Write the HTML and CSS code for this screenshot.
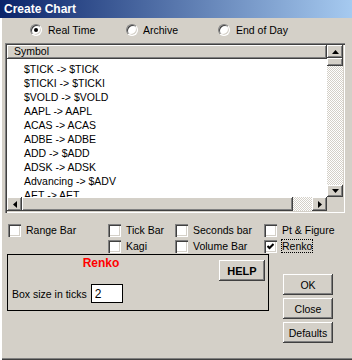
FILE: index.html
```html
<!DOCTYPE html>
<html lang="en">
<head>
    <meta charset="UTF-8">
    <meta name="viewport" content="width=device-width, initial-scale=1.0">
    <title>Create Chart</title>
    <link rel="stylesheet" href="styles.css">
</head>
<body>

<div class="window">

    <!-- Title bar -->
    <div class="titlebar">Create Chart</div>

    <!-- Data source -->
    <div class="sources">
        <label class="radio-item src-real"><span class="radio checked"></span>Real Time</label>
        <label class="radio-item src-archive"><span class="radio"></span>Archive</label>
        <label class="radio-item"><span class="radio"></span>End of Day</label>
    </div>

    <!-- Symbol list -->
    <div class="listbox">
        <div class="list-view">
            <div class="list-header">Symbol</div>
            <ul class="list-items">
                <li>$TICK -&gt; $TICK</li>
                <li>$TICKI -&gt; $TICKI</li>
                <li>$VOLD -&gt; $VOLD</li>
                <li>AAPL -&gt; AAPL</li>
                <li>ACAS -&gt; ACAS</li>
                <li>ADBE -&gt; ADBE</li>
                <li>ADD -&gt; $ADD</li>
                <li>ADSK -&gt; ADSK</li>
                <li>Advancing -&gt; $ADV</li>
                <li>AET -&gt; AET</li>
            </ul>
        </div>
        <div class="vscroll">
            <div class="sb-btn sb-v"><svg width="7" height="4" viewBox="0 0 7 4"><path d="M3.5 0L7 4H0z" fill="#000"/></svg></div>
            <div class="sb-thumb v-thumb"></div>
            <div class="sb-track"></div>
            <div class="sb-btn sb-v sb-down"><svg width="7" height="4" viewBox="0 0 7 4"><path d="M0 0H7L3.5 4z" fill="#000"/></svg></div>
        </div>
        <div class="hscroll">
            <div class="sb-btn sb-h"><svg width="4" height="7" viewBox="0 0 4 7"><path d="M0 3.5L4 0V7z" fill="#000"/></svg></div>
            <div class="sb-thumb h-thumb"></div>
            <div class="sb-track"></div>
            <div class="sb-btn sb-h"><svg width="4" height="7" viewBox="0 0 4 7"><path d="M0 0L4 3.5L0 7z" fill="#000"/></svg></div>
        </div>
        <div class="sb-corner"></div>
    </div>

    <!-- Chart types -->
    <div class="options">
        <label class="check-item"><span class="check"></span>Range Bar</label>
        <label class="check-item"><span class="check"></span>Tick Bar</label>
        <label class="check-item"><span class="check"></span>Seconds bar</label>
        <label class="check-item"><span class="check"></span>Pt &amp; Figure</label>
        <span></span>
        <label class="check-item"><span class="check"></span>Kagi</label>
        <label class="check-item"><span class="check"></span>Volume Bar</label>
        <label class="check-item"><span class="check"><svg width="7" height="7" viewBox="0 0 7 7"><path d="M0.5 3L2.5 5L6.5 1" stroke="#000" stroke-width="2" fill="none"/></svg></span><span class="focus">Renko</span></label>
    </div>

    <div class="bottom">
        <!-- Settings for selected type -->
        <div class="group">
            <div class="group-head">
                <div class="group-title">Renko</div>
                <button class="btn help-btn">HELP</button>
            </div>
            <div class="field">
                <span>Box size in ticks</span>
                <input class="num-input" type="text" value="2">
            </div>
        </div>

        <div class="actions">
            <button class="btn">OK</button>
            <button class="btn">Close</button>
            <button class="btn">Defaults</button>
        </div>
    </div>

</div>

</body>
</html>
```

FILE: styles.css
```css
body {
    margin: 0;
    padding: 0;
    font-family: "Liberation Sans", Arial, sans-serif;
    font-size: 10.5px;
    color: #000;
    background-color: #d4d0c8;
}

/* Dialog frame */
.window {
    width: 352px;
    height: 360px;
    box-sizing: border-box;
    background-color: #d4d0c8;
    box-shadow: inset 2px 0 #fff, inset 0 -1px #404040, inset 0 -2px #808080;
    overflow: hidden;
}

.titlebar {
    height: 18px;
    line-height: 18px;
    padding-left: 4px;
    font-size: 12px;
    font-weight: bold;
    color: #fff;
    background: linear-gradient(to right, #0a246a, #a6caf0);
}

/* Radio row */
.sources {
    display: flex;
    align-items: center;
    height: 16px;
    margin-top: 4px;
    padding-left: 30px;
}

.radio-item {
    display: flex;
    align-items: center;
    gap: 6px;
}

.src-real { width: 96px; }
.src-archive { width: 92px; gap: 5px; }

.radio {
    position: relative;
    width: 12px;
    height: 12px;
    border-radius: 50%;
    background: #fff;
    box-sizing: border-box;
    border: 1px solid;
    border-color: #808080 #fff #fff #808080;
    box-shadow: inset 1px 1px #404040, inset -1px -1px #d4d0c8;
}

.radio.checked::after {
    content: "";
    position: absolute;
    left: 3px;
    top: 3px;
    width: 4px;
    height: 4px;
    border-radius: 50%;
    background: #000;
}

/* List box with scrollbars */
.listbox {
    display: grid;
    grid-template-columns: 320px 16px;
    grid-template-rows: 152px 14px;
    width: 340px;
    height: 170px;
    box-sizing: border-box;
    margin: 5px 0 0 5px;
    padding: 2px;
    box-shadow: inset 1px 1px #808080, inset 2px 2px #404040, inset -1px -1px #fff, inset -2px -2px #d4d0c8;
}

.list-view {
    background: #fff;
    overflow: hidden;
}

.list-header {
    height: 14px;
    line-height: 13px;
    padding-left: 7px;
    background: #d4d0c8;
    box-shadow: inset -1px -1px #404040, inset 1px 1px #fff, inset -2px -2px #808080;
}

.list-items {
    list-style: none;
    margin: 0;
    padding: 3px 0 0 17px;
}

.list-items li {
    height: 14px;
    line-height: 14px;
    white-space: nowrap;
}

.vscroll,
.hscroll {
    display: flex;
    background: repeating-conic-gradient(#fff 0 25%, #d4d0c8 0 50%) 0 0 / 2px 2px;
}

.vscroll { flex-direction: column; }

.sb-track { flex: 1; }

.sb-btn,
.sb-thumb {
    display: flex;
    align-items: center;
    justify-content: center;
    background: #d4d0c8;
    box-shadow: inset -1px -1px #404040, inset 1px 1px #fff, inset -2px -2px #808080;
}

.sb-v { height: 13px; }
.sb-down { height: 12px; }
.sb-h { width: 15px; }
.v-thumb { height: 8px; }
.h-thumb { width: 271px; }

.sb-corner { background: #d4d0c8; }

/* Chart type checkboxes */
.options {
    display: grid;
    grid-template-columns: 100px 67px 89px auto;
    grid-auto-rows: 16px;
    margin-top: 9px;
    padding-left: 8px;
}

.check-item {
    display: flex;
    align-items: center;
    gap: 5px;
    white-space: nowrap;
}

.check {
    display: flex;
    align-items: center;
    justify-content: center;
    width: 13px;
    height: 13px;
    box-sizing: border-box;
    background: #fff;
    box-shadow: inset 1px 1px #808080, inset 2px 2px #404040, inset -1px -1px #fff, inset -2px -2px #d4d0c8;
}

.focus {
    outline: 1px dotted #000;
    line-height: 12px;
}

/* Bottom part */
.bottom {
    display: flex;
    align-items: flex-start;
    padding-left: 7px;
}

.group {
    width: 262px;
    height: 57px;
    box-sizing: border-box;
    border: 1px solid #000;
}

.group-head {
    display: flex;
    align-items: flex-start;
}

.group-title {
    width: 186px;
    margin-top: 1px;
    text-align: center;
    font-size: 12px;
    font-weight: bold;
    line-height: 14px;
    color: #ff0000;
}

.btn {
    width: 50px;
    height: 21px;
    padding: 0;
    border: none;
    font-family: "Liberation Sans", Arial, sans-serif;
    font-size: 10.5px;
    color: #000;
    background: #d4d0c8;
    box-shadow: inset -1px -1px #404040, inset 1px 1px #fff, inset -2px -2px #808080;
}

.help-btn {
    width: 46px;
    margin: 5px 0 0 25px;
    font-size: 11px;
    font-weight: bold;
}

.field {
    display: flex;
    align-items: center;
    gap: 4px;
    margin-top: 3px;
    padding-left: 4px;
}

.num-input {
    width: 32px;
    height: 19px;
    box-sizing: border-box;
    padding: 0 0 0 3px;
    border: 1px solid #000;
    font-family: "Liberation Sans", Arial, sans-serif;
    font-size: 12px;
    background: #fff;
}

.actions {
    display: flex;
    flex-direction: column;
    gap: 3px;
    margin: 20px 0 0 14px;
}
```
